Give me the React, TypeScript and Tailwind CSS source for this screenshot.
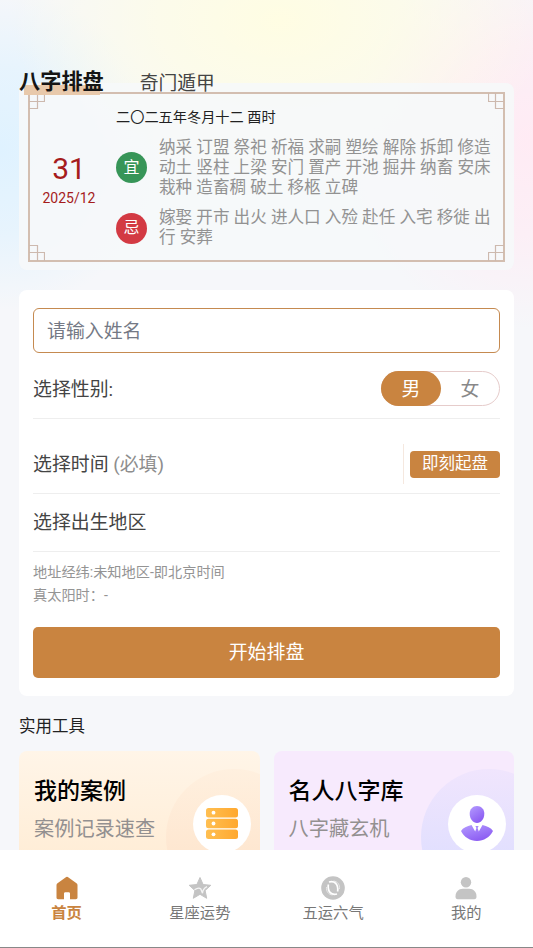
import type { ReactNode } from 'react'

interface AlmanacRow {
  mark: string
  color: string
  text: string
}

const almanac: AlmanacRow[] = [
  {
    mark: '宜',
    color: 'bg-[#379558]',
    text: '纳采 订盟 祭祀 祈福 求嗣 塑绘 解除 拆卸 修造 动土 竖柱 上梁 安门 置产 开池 掘井 纳畜 安床 栽种 造畜稠 破土 移柩 立碑',
  },
  {
    mark: '忌',
    color: 'bg-[#d33a43]',
    text: '嫁娶 开市 出火 进人口 入殓 赴任 入宅 移徙 出行 安葬',
  },
]

// Fretwork corner, drawn for the top left and flipped for the others
function Corner({ className }: { className: string }) {
  return (
    <svg className={`absolute size-4 ${className}`} viewBox="0 0 16 16" fill="none" stroke="#cdb9ae" strokeWidth="1.200">
      <path d="M15.500 0v8.500H0M8.500 0v15.500H0" />
    </svg>
  )
}

function Almanac() {
  return (
    <section className="h-[187px] rounded-lg bg-[#f6f8fa]/90 px-[9px] pt-[9px]">
      <div className="relative flex h-[170px] border-2 border-[#d3beb0]">
        <Corner className="-left-px -top-px" />
        <Corner className="-right-px -top-px -scale-x-100" />
        <Corner className="-bottom-px -left-px -scale-y-100" />
        <Corner className="-bottom-px -right-px -scale-100" />
        <div className="flex w-[78px] flex-col items-center pt-[57px] text-[#a51c1c]">
          <span className="text-[30px] leading-[36px]">31</span>
          <span className="mt-px text-[14px] leading-5">2025/12</span>
        </div>
        <div className="w-[395px] pl-2 pt-[13px]">
          <h2 className="text-[14.2px] leading-5 text-[#222]">二〇二五年冬月十二 酉时</h2>
          {almanac.map((row) => (
            <div key={row.mark} className="mt-[11px] flex items-center">
              <span className={`flex size-[31px] shrink-0 items-center justify-center rounded-full text-[16px] text-white ${row.color}`}>
                {row.mark}
              </span>
              <p className="ml-3 w-[335px] text-[16.6px] leading-[19.8px] text-[#929292]">{row.text}</p>
            </div>
          ))}
        </div>
      </div>
    </section>
  )
}

function BirthForm() {
  return (
    <section className="mt-5 h-[406px] rounded-lg bg-white px-[14px] pt-[18px] text-[18.9px] text-[#444]">
      <div className="flex h-[45px] items-center rounded-md border border-[#c58a50] px-[13px] pt-[3px] text-[#747985]">请输入姓名</div>
      <div className="flex h-[66px] items-center justify-between border-b border-[#eee] pt-[6px]">
        <span className="pt-[3px]">选择性别:</span>
        <div className="flex h-[35px] w-[119px] rounded-full border border-[#e6cccb]">
          <span className="-my-px -ml-px flex w-[60px] items-center justify-center rounded-full bg-[#c98440] pt-[3px] text-white">男</span>
          <span className="flex flex-1 items-center justify-center pt-[3px] text-[#888]">女</span>
        </div>
      </div>
      <div className="flex h-[75px] items-center justify-between border-b border-[#eee] pt-[16px]">
        <span className="pt-0.5">
          选择时间 <span className="text-[#8d8d8d]">(必填)</span>
        </span>
        <div className="flex h-10 items-center border-l border-[#f5e8df] pl-[6px]">
          <span className="flex h-[27px] w-[90px] items-center justify-center rounded bg-[#c98440] pt-px text-[16.5px] text-white">即刻起盘</span>
        </div>
      </div>
      <div className="flex h-[58px] items-center border-b border-[#eee] pt-0.5">选择出生地区</div>
      <div className="pt-[9px] text-[14.200px] leading-[22.5px] text-[#949494]">
        <p>地址经纬:未知地区-即北京时间</p>
        <p>真太阳时：-</p>
      </div>
      <button className="mt-[21px] flex h-[51px] w-full items-center justify-center rounded-[5px] bg-[#c98440] pt-0.5 text-white">开始排盘</button>
    </section>
  )
}

function DatabaseIcon() {
  return (
    <svg className="size-8" viewBox="0 0 32 32">
      <defs>
        <linearGradient id="amber" x1="0" x2="1">
          <stop stopColor="#ffbf51" />
          <stop offset="1" stopColor="#ffa82f" />
        </linearGradient>
      </defs>
      {[0, 10.8, 21.600].map((y) => (
        <g key={y}>
          <rect y={y} width="32" height="9.400" rx="2.500" fill="url(#amber)" />
          <circle cx="7.500" cy={y + 4.700} r="1.900" fill="#fff" />
        </g>
      ))}
    </svg>
  )
}

function CelebrityIcon() {
  return (
    <svg className="h-9 w-8" viewBox="0 0 32 36">
      <defs>
        <linearGradient id="violet" x1="0" y1="0" x2=".6" y2="1">
          <stop stopColor="#b49bff" />
          <stop offset="1" stopColor="#8b5bf2" />
        </linearGradient>
      </defs>
      <path d="M16 0c4.300 0 7.300 3.200 7.300 7.700 0 5.200-3.400 9.300-7.300 9.300s-7.300-4.100-7.300-9.300C8.700 3.200 11.700 0 16 0Z" fill="url(#violet)" />
      <path d="M10.500 19 14.200 25.500l1.200-3.500-1-2h3.200l-1 2 1.200 3.500L21.500 19c4.500 1 8.500 2.800 10.500 6-3.200 6.200-9.200 10-16 10S3.200 31.200 0 25c2-3.200 6-5 10.500-6Z" fill="url(#violet)" />
    </svg>
  )
}

interface ToolCardProps {
  title: string
  subtitle: string
  background: string
  halo: string
  icon: ReactNode
}

function ToolCard({ title, subtitle, background, halo, icon }: ToolCardProps) {
  return (
    <article className={`relative h-[120px] flex-1 overflow-hidden rounded-lg pl-[15px] pt-6 ${background}`}>
      <div className={`absolute left-[147px] top-[18px] size-[136px] rounded-full ${halo}`} />
      <div className="absolute left-[174px] top-[44px] flex size-[58px] items-center justify-center rounded-full bg-white">{icon}</div>
      <h3 className="relative text-[23px] font-medium leading-[34px] text-black">{title}</h3>
      <p className="relative mt-[5px] text-[20.2px] leading-[30px] text-[#939090]">{subtitle}</p>
    </article>
  )
}

function HomeIcon() {
  return (
    <svg className="size-6" viewBox="0 0 24 24" fill="#c98440">
      <path d="M10.500 1.400a2.500 2.500 0 0 1 3 0l8 5.800c.7.500 1 1.100 1 2v12.300c0 1-.7 1.700-1.700 1.700h-5.800v-5.500c0-1-.5-1.500-1.400-1.500h-3.200c-.9 0-1.400.5-1.400 1.500v5.500H3.200c-1 0-1.700-.7-1.700-1.700V9.200c0-.9.300-1.500 1-2Z" />
    </svg>
  )
}

function StarIcon() {
  return (
    <svg className="size-6" viewBox="0 0 24 24">
      <path
        d="m12 1.500 3.100 7 7.700.8-5.700 5.200 1.600 7.800-6.700-4-6.700 4 1.600-7.800-5.700-5.200 7.700-.8Z"
        fill="#c4c4c4"
        stroke="#c4c4c4"
        strokeLinejoin="round"
      />
      <path d="M6.500 13.800c3-2 5-2 6.300-.8l1.700 4.200c.2-3 1.500-5 4.500-6.500" fill="none" stroke="#f4f4f4" strokeWidth="1.300" />
    </svg>
  )
}

function CycleIcon() {
  return (
    <svg className="size-6" viewBox="0 0 24 24" fill="none">
      <circle cx="12" cy="12" r="11.800" fill="#c4c4c4" />
      <path d="M8 6c5.500-1.500 9.500 1.800 8.700 9.500M16 18c-5.500 1.500-9.500-1.800-8.700-9.500" stroke="#fff" strokeWidth="1.700" />
      <path d="M12.500 5c4 .5 6.500 3.500 6 8M11.500 19c-4-.5-6.500-3.500-6-8" stroke="#f0f0f0" strokeWidth=".8" />
    </svg>
  )
}

function UserIcon() {
  return (
    <svg className="size-6" viewBox="0 0 24 24" fill="#c4c4c4">
      <circle cx="12" cy="6.300" r="5.200" />
      <path d="M1.500 20.500c0-4.600 3-7.700 7.300-7.700h6.400c4.300 0 7.300 3.100 7.300 7.700 0 1.700-.7 2.700-2.200 2.700H3.700c-1.500 0-2.200-1-2.200-2.700Z" />
    </svg>
  )
}

const navItems = [
  { label: '首页', icon: <HomeIcon />, active: true },
  { label: '星座运势', icon: <StarIcon />, active: false },
  { label: '五运六气', icon: <CycleIcon />, active: false },
  { label: '我的', icon: <UserIcon />, active: false },
]

export default function App() {
  return (
    <div className="flex h-[948px] w-[533px] flex-col overflow-hidden bg-[#f6f7fa] bg-[radial-gradient(ellipse_270px_170px_at_280px_20px,#fffde3_0%,#fffde3aa_45%,#fffde300_100%),radial-gradient(ellipse_160px_160px_at_0px_150px,#dff2ff_0%,#dff2ffaa_50%,#dff2ff00_100%),radial-gradient(ellipse_190px_190px_at_533px_140px,#ffebf4_0%,#ffebf4aa_50%,#ffebf400_100%)] font-['Roboto','Noto_Sans_CJK_SC',sans-serif]">
      <main className="min-h-0 flex-1 overflow-hidden px-[19px] pt-[67px]">
        <nav className="relative z-10 -mb-[14px] flex h-[30px] items-center">
          <span className="relative text-[21.2px] font-bold leading-[30px] text-[#151515]">
            <span className="absolute bottom-0.5 left-[5px] -z-10 h-[10px] w-[76px] bg-[#e8c9ab]" />
            八字排盘
          </span>
          <span className="ml-9 pt-[3px] text-[18.8px] leading-[30px] text-[#444]">奇门遁甲</span>
        </nav>
        <Almanac />
        <BirthForm />
        <h2 className="mt-[19px] text-[16.5px] leading-6 text-[#222]">实用工具</h2>
        <div className="mt-3 flex gap-[14px]">
          <ToolCard
            title="我的案例"
            subtitle="案例记录速查"
            background="bg-linear-to-b from-[#fff5e8] to-[#ffecd4]"
            halo="bg-linear-to-b from-[#fff0df] to-[#fde1c7]"
            icon={<DatabaseIcon />}
          />
          <ToolCard
            title="名人八字库"
            subtitle="八字藏玄机"
            background="bg-[#f7eafd]"
            halo="bg-linear-to-b from-[#f0e5fd] to-[#d9dcff]"
            icon={<CelebrityIcon />}
          />
        </div>
      </main>
      <footer className="flex h-[98px] border-b border-[#888] bg-white pt-[26px]">
        {navItems.map((item) => (
          <div
            key={item.label}
            className={`flex flex-1 flex-col items-center text-[15.3px] leading-[24px] ${item.active ? 'font-bold text-[#c98440]' : 'text-[#777]'}`}
          >
            {item.icon}
            <span className="mt-px">{item.label}</span>
          </div>
        ))}
      </footer>
    </div>
  )
}
